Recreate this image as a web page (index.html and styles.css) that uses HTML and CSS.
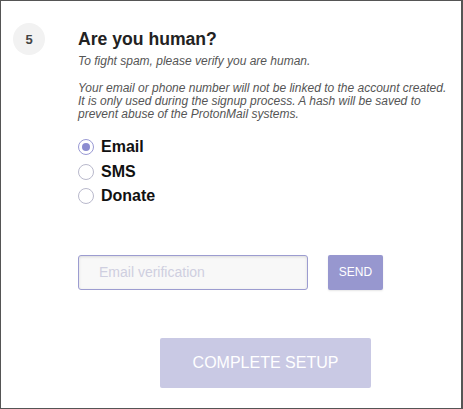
FILE: index.html
```html
<!DOCTYPE html>
<html>
<head>
<meta charset="utf-8">
<link rel="stylesheet" href="styles.css">
</head>
<body>
<div class="frame">
  <div class="step">
    <div class="step-num">5</div>
    <div class="content">
      <h2 class="title">Are you human?</h2>
      <p class="lead">To fight spam, please verify you are human.</p>
      <p class="note">Your email or phone number will not be linked to the account created. It is only used during the signup process. A hash will be saved to prevent abuse of the ProtonMail systems.</p>
      <div class="options">
        <label class="option"><span class="radio checked"></span>Email</label>
        <label class="option"><span class="radio"></span>SMS</label>
        <label class="option"><span class="radio"></span>Donate</label>
      </div>
      <div class="verify">
        <div class="field">Email verification</div>
        <div class="send">SEND</div>
      </div>
    </div>
  </div>
  <div class="footer">
    <div class="complete">COMPLETE SETUP</div>
  </div>
</div>
</body>
</html>
```

FILE: styles.css
```css
* { box-sizing: border-box; }
html, body { margin: 0; padding: 0; }
body { font-family: "Liberation Sans", Arial, sans-serif; background: #fff; }
.frame {
  width: 463px;
  height: 409px;
  border: 1px solid #555;
  border-right-width: 2px;
  overflow: hidden;
}
.step {
  display: flex;
  padding: 22px 0 0 12px;
}
.step-num {
  width: 32px;
  height: 32px;
  flex: none;
  border-radius: 50%;
  background: #f2f2f2;
  color: #444;
  font-weight: bold;
  font-size: 13px;
  display: flex;
  align-items: center;
  justify-content: center;
}
.content {
  margin-left: 33px;
  width: 372px;
}
.title {
  margin: 6px 0 0;
  font-size: 17.6px;
  line-height: 21px;
  font-weight: bold;
  color: #222;
}
.lead, .note {
  font-style: italic;
  font-size: 12px;
  color: #555;
  margin: 0;
  line-height: 13px;
}
.lead { margin-top: 5px; }
.note { margin-top: 14px; }
.options {
  margin-top: 14px;
  display: flex;
  flex-direction: column;
}
.option {
  display: flex;
  align-items: center;
  height: 24.5px;
  font-size: 16px;
  font-weight: bold;
  color: #111;
}
.radio {
  width: 16px;
  height: 16px;
  border: 1px solid #b9b9cc;
  border-radius: 50%;
  margin-right: 7px;
  background: #fff;
  display: flex;
  align-items: center;
  justify-content: center;
}
.radio.checked { border-color: #9a9ad4; }
.radio.checked::after {
  content: "";
  width: 8px;
  height: 8px;
  border-radius: 50%;
  background: #8c8cd0;
}
.verify {
  display: flex;
  margin-top: 46px;
  gap: 20px;
}
.field {
  width: 230px;
  height: 35px;
  border: 1px solid #9c9cd0;
  border-radius: 3px;
  background: #f8f8f8;
  box-shadow: inset 0 1px 3px rgba(0,0,0,0.12);
  color: #cfcfe0;
  font-size: 14px;
  padding-left: 20px;
  display: flex;
  align-items: center;
}
.send {
  width: 55px;
  height: 35px;
  background: #9797cf;
  border-radius: 2px;
  color: #fff;
  font-size: 12px;
  display: flex;
  align-items: center;
  justify-content: center;
  box-shadow: 0 1px 2px rgba(0,0,0,0.1);
}
.footer {
  display: flex;
  padding-left: 159px;
  margin-top: 48px;
}
.complete {
  width: 211px;
  height: 50px;
  background: #c9c9e4;
  border-radius: 2px;
  color: #fff;
  font-size: 16px;
  display: flex;
  align-items: center;
  justify-content: center;
}
```
